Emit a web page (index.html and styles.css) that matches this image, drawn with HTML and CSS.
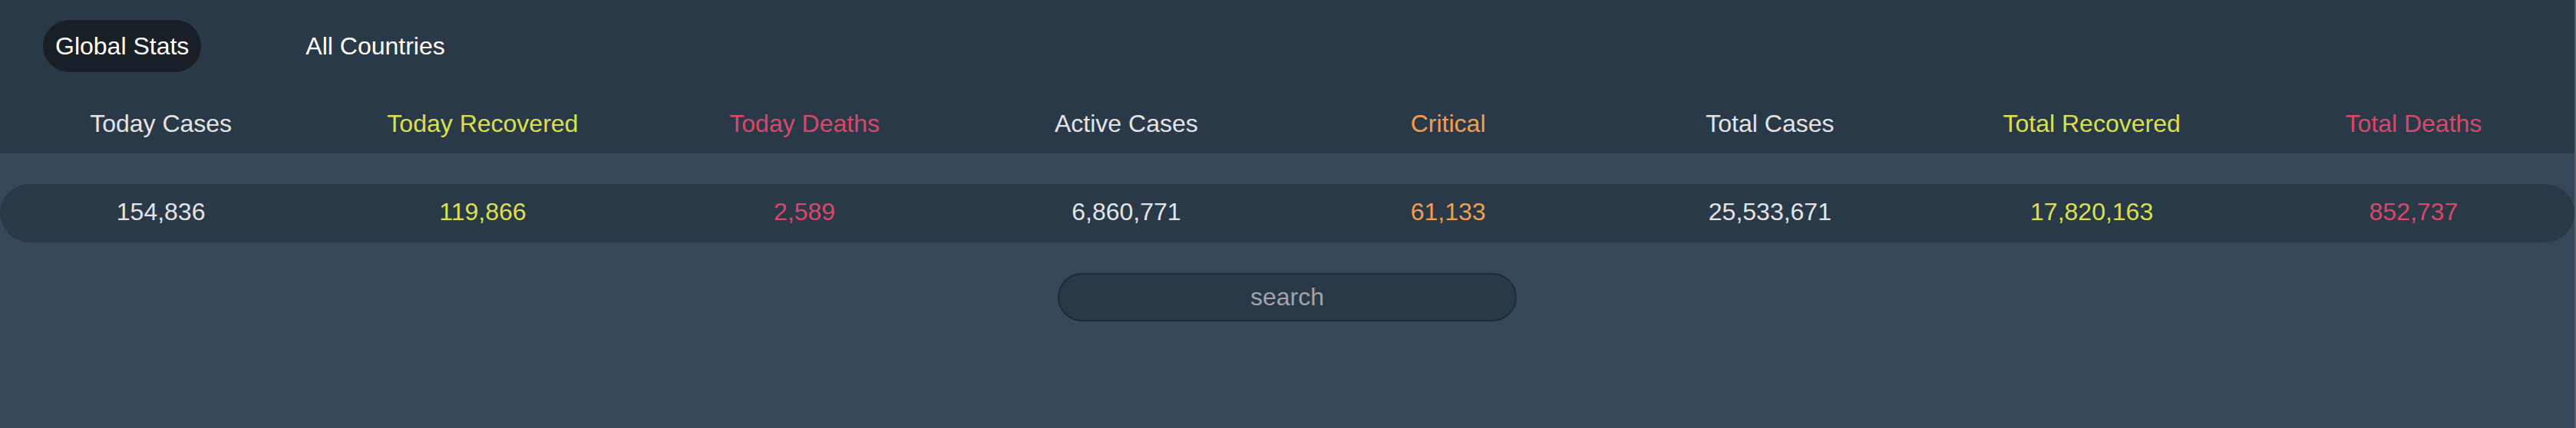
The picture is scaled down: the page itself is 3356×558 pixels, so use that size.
FILE: index.html
```html
<!DOCTYPE html>
<html lang="en">
<head>
<meta charset="utf-8">
<title>Global Stats</title>
<link rel="stylesheet" href="styles.css">
</head>
<body>
<div class="page">
  <header class="header">
    <nav class="nav">
      <a class="nav-item active">Global Stats</a>
      <a class="nav-item">All Countries</a>
    </nav>
    <div class="cols labels">
      <div class="white">Today Cases</div>
      <div class="yellow">Today Recovered</div>
      <div class="red">Today Deaths</div>
      <div class="white">Active Cases</div>
      <div class="orange">Critical</div>
      <div class="white">Total Cases</div>
      <div class="yellow">Total Recovered</div>
      <div class="red">Total Deaths</div>
    </div>
  </header>
  <main class="main">
    <div class="cols values">
      <div class="white">154,836</div>
      <div class="yellow">119,866</div>
      <div class="red">2,589</div>
      <div class="white">6,860,771</div>
      <div class="orange">61,133</div>
      <div class="white">25,533,671</div>
      <div class="yellow">17,820,163</div>
      <div class="red">852,737</div>
    </div>
    <div class="search-wrap">
      <input class="search" type="text" placeholder="search">
    </div>
  </main>
</div>
</body>
</html>
```
FILE: styles.css
```css
html {
  background: #35485a;
}
body {
  margin: 0;
  min-height: 100vh;
  background: #35485a;
  font-family: "Liberation Sans", Arial, Helvetica, sans-serif;
  border-right: 2px solid #56636f;
  box-sizing: border-box;
  overflow: hidden;
}
.page {
  display: flex;
  flex-direction: column;
}
.header {
  background: #2a3947;
  height: 200px;
  display: flex;
  flex-direction: column;
}
.nav {
  display: flex;
  gap: 120px;
  padding: 26px 0 0 56px;
}
.nav-item {
  display: block;
  height: 68px;
  line-height: 68px;
  padding: 0 16px;
  border-radius: 34px;
  font-size: 32px;
  color: #ffffff;
  cursor: pointer;
}
.nav-item.active {
  background: #181f27;
}
.cols {
  display: grid;
  grid-template-columns: repeat(8, 1fr);
  text-align: center;
  font-size: 32px;
}
.labels {
  padding-top: 49px;
  line-height: 36px;
}
.main {
  display: flex;
  flex-direction: column;
  padding-top: 40px;
}
.values {
  background: #2a3947;
  height: 76px;
  box-sizing: border-box;
  padding-bottom: 4px;
  line-height: 72px;
  border-radius: 38px;
}
.white { color: #e4e4e6; }
.yellow { color: #dbe04c; }
.red { color: #d9486a; }
.orange { color: #f29e4c; }
.search-wrap {
  display: flex;
  justify-content: center;
  padding-top: 40px;
}
.search {
  width: 598px;
  height: 63px;
  box-sizing: border-box;
  border: 2px solid #1f2b37;
  border-radius: 32px;
  background: #2a3947;
  color: #e4e4e6;
  font-family: "Liberation Sans", Arial, Helvetica, sans-serif;
  font-size: 32px;
  text-align: center;
  outline: none;
  padding: 0 20px;
}
.search::placeholder {
  color: #a2a4a6;
}
```
